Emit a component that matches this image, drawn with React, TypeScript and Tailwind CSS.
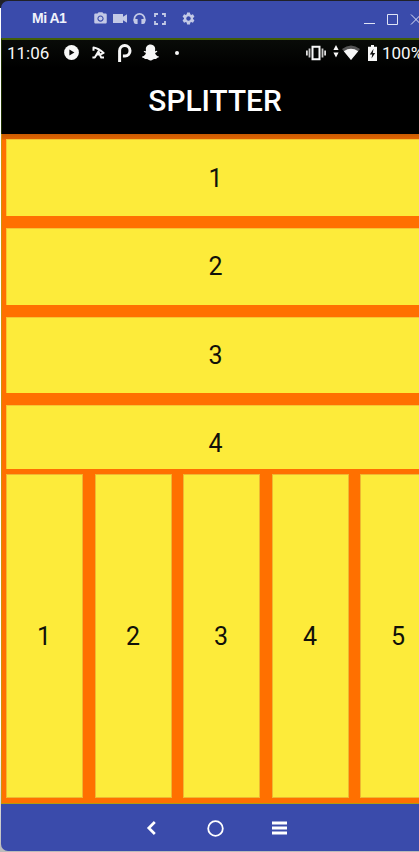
import React from "react";
import { MdCameraAlt, MdSettings } from "react-icons/md";
import { FaSnapchatGhost } from "react-icons/fa";

function WindowBar() {
  return (
    <header className="flex h-[37px] shrink-0 items-start rounded-tl-[7px] bg-[#3a4bab] font-['Liberation_Sans',sans-serif] text-[#c3c9e6]">
      <span className="ml-[31px] mt-[7px] w-[60px] shrink-0 whitespace-nowrap text-[14px] font-bold leading-[20px] tracking-[-0.5px] text-[#f0f2fb]">Mi A1</span>
      <MdCameraAlt className="ml-px mt-[10px] h-[15px] w-[15px] shrink-0" />
      <svg className="ml-[5px] mt-[13px] h-[9px] w-[14px] shrink-0" viewBox="0 0 14 9" fill="currentColor">
        <path d="M0 0h10v2.7L14 .3v8.4l-4-2.4V9H0z" />
      </svg>
      <svg className="ml-[6px] mt-[12px] h-[12px] w-[13px] shrink-0" viewBox="0 0 13 12" fill="none" stroke="currentColor">
        <path d="M1.4 8V6a5.1 5.1 0 0 1 10.2 0V8" strokeWidth="1.8" />
        <path d="M.6 6h4v5H2.7Q.6 10.7.6 8.5zM12.4 6h-4v5h1.9q2.1-.3 2.1-2.5z" fill="currentColor" stroke="none" />
      </svg>
      <svg className="ml-[8px] mt-[12px] h-[12px] w-[12px] shrink-0" viewBox="0 0 12 12" fill="none" stroke="currentColor" strokeWidth="1.8">
        <path d="M1 4V1h3M8 1h3v3M11 8v3H8M4 11H1V8" />
      </svg>
      <MdSettings className="ml-[15px] mt-[10px] h-[15px] w-[15px] shrink-0" />
      <svg className="ml-[168px] mt-[13px] h-[14px] w-[58px] shrink-0" viewBox="0 0 58 14" fill="none" stroke="#e0e4f5">
        <path d="M0 9.5h11M23.5.5h10v10h-10zM47 .5l10 10M57 .5l-10 10" />
      </svg>
    </header>
  );
}

function StatusBar() {
  return (
    <div className="flex h-[26px] items-center text-[17px] leading-[26px] text-[#f7f7f7]">
      <span className="ml-[5px] w-[57px] shrink-0">11:06</span>
      <svg className="-mt-px h-[15px] w-[15px] shrink-0" viewBox="0 0 15 15">
        <circle cx="7.5" cy="7.5" r="7.4" fill="currentColor" />
        <path d="M5.4 4.4v6.2l5-3.1z" fill="#050505" />
      </svg>
      <svg className="-mt-px ml-[13px] h-[13px] w-[13px] shrink-0" viewBox="0 0 13 13" fill="none" stroke="currentColor" strokeWidth="2" strokeLinejoin="round">
        <path d="M1.5 4.8V1.4Q6.5 2.2 11.6 6.9L8.6 8.4M.4 11.6h2.4L6.4 5.4l2.8 6.2H12M4.4 8.6h3.4" />
      </svg>
      <svg className="-mt-px ml-[13px] h-[18px] w-[14px] shrink-0" viewBox="0 0 14 18" fill="none" stroke="currentColor" strokeWidth="3">
        <path d="M1.6 18V6.8A5.2 5.2 0 1 1 7 12H4.9" />
      </svg>
      <FaSnapchatGhost className="-mt-px ml-[10px] h-[17px] w-[17px] shrink-0" />
      <i className="-mt-px ml-[16px] h-[4px] w-[4px] shrink-0 rounded-full bg-[#f7f7f7]" />
      <svg className="-mt-px ml-[127px] h-[16px] w-[20px] shrink-0" viewBox="0 0 20 16" fill="none" stroke="currentColor">
        <path d="M6.5 1.8h7v12.4h-7z" strokeWidth="2" />
        <path d="M3.5 3.5v9M16.5 3.5v9" strokeWidth="1.8" stroke="#c9c9c9" />
        <path d="M.9 5.5v5M19.1 5.5v5" strokeWidth="1.6" />
      </svg>
      <svg className="-mt-[4px] ml-[7px] h-[13px] w-[6px] shrink-0" viewBox="0 0 6 13">
        <path d="M3 0l2.6 5H.4zM3 12.5L.4 7.5h5.2z" fill="currentColor" />
      </svg>
      <svg className="-mt-px ml-[3px] h-[16px] w-[18px] shrink-0" viewBox="0 0 18 16">
        <path d="M0 4Q9-3 18 4L9 15z" fill="#555" />
        <path d="M1.8 6.2Q9 1.3 16.2 6.2L9 15z" fill="currentColor" />
      </svg>
      <svg className="-mt-px ml-[8px] h-[16px] w-[9px] shrink-0" viewBox="0 0 9 16">
        <path d="M3 0h3v1.7h3V16H0V1.7h3z" fill="currentColor" />
        <path d="M5.5 3.7L1.8 9.5h2.4l-.7 4 3.7-5.6H4.8z" fill="#111" />
      </svg>
      <span className="ml-[5px]">100%</span>
    </div>
  );
}

const rows = [
  { label: "1", size: "h-[77px] pt-px" },
  { label: "2", size: "h-[77px]" },
  { label: "3", size: "h-[76px]" },
  { label: "4", size: "h-[76px]" },
];

const columns = [
  { label: "1", size: "w-[77px]" },
  { label: "2", size: "w-[77px] ml-[12px]" },
  { label: "3", size: "w-[77px] ml-[11px]" },
  { label: "4", size: "w-[77px] ml-[12px]" },
  { label: "5", size: "w-[77px] ml-[11px]" },
];

function Splitter() {
  return (
    <main className="flex h-[670px] flex-col overflow-hidden border-b border-l border-b-[#b49a0c] border-l-[#ce930b] bg-[#ff7000] text-[25px] text-[#11110a]">
      <div className="flex h-[335px] shrink-0 flex-col gap-[12px] overflow-hidden bg-[linear-gradient(#c95b00_0,#e16403_5px,#ff7000_6px)] pl-[4px] pt-[5px]">
        {rows.map((row) => (
          <div key={row.label} className={`flex w-[418px] shrink-0 items-center justify-center border-l border-t border-[#f6c633] bg-[#fdeb3a] ${row.size}`}>
            {row.label}
          </div>
        ))}
      </div>
      <div className="mt-[5px] flex h-[324px] shrink-0 pl-[4px]">
        {columns.map((column) => (
          <div key={column.label} className={`flex h-full shrink-0 items-center justify-center border border-[#efb832] bg-[#fdeb3a] pr-px pt-[2px] ${column.size}`}>
            {column.label}
          </div>
        ))}
      </div>
    </main>
  );
}

function NavigationBar() {
  return (
    <footer className="flex h-[47px] shrink-0 items-center rounded-bl-[7px] bg-[#3a4bab] pl-[144px] pt-[1px] text-white">
      <svg className="h-[16px] w-[12px] shrink-0" viewBox="0 0 12 16" fill="none" stroke="currentColor" strokeWidth="2.7">
        <path d="M9.8 2L3.8 8l6 6" />
      </svg>
      <svg className="ml-[50px] h-[17px] w-[17px] shrink-0" viewBox="0 0 17 17" fill="none" stroke="currentColor" strokeWidth="1.8">
        <circle cx="8.5" cy="8.5" r="7.3" />
      </svg>
      <svg className="ml-[48px] h-[14px] w-[15px] shrink-0" viewBox="0 0 15 14" stroke="currentColor" strokeWidth="2.8">
        <path d="M0 2h15M0 7h15M0 12h15" />
      </svg>
    </footer>
  );
}

export default function App() {
  return (
    <div className="h-[852px] w-[419px] overflow-hidden bg-[linear-gradient(#202128_0,#202128_8px,#fff_8px,#fff_740px,#bbb_852px)] pl-px pt-px font-['Roboto',sans-serif]">
      <WindowBar />
      <div className="h-[96px] border-l border-t-2 border-l-[#203400] border-t-[#425f08] bg-[linear-gradient(#090b08,#000_28px)]">
        <StatusBar />
        <h1 className="mt-[15px] pl-[9px] text-center text-[29.8px] font-medium leading-[40px] text-white">SPLITTER</h1>
      </div>
      <Splitter />
      <NavigationBar />
    </div>
  );
}
